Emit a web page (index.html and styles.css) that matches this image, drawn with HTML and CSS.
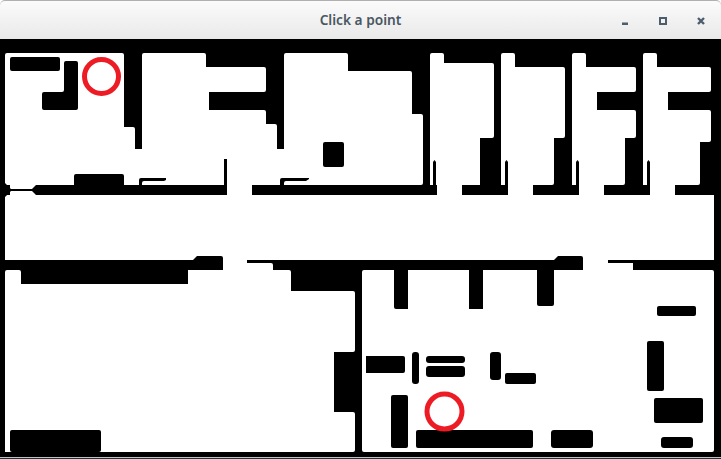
FILE: index.html
```html
<!DOCTYPE html>
<html lang="en">
<head>
<meta charset="utf-8">
<title>Click a point</title>
<link rel="stylesheet" href="styles.css">
</head>
<body>
<div class="window">
  <header class="titlebar">
    <span class="spacer"></span>
    <h1 class="title">Click a point</h1>
    <div class="controls">
      <svg class="ctl" width="8" height="8" viewBox="0 0 8 8"><rect class="ico" x="1" y="5.500" width="6" height="2.500"/></svg>
      <svg class="ctl" width="8" height="8" viewBox="0 0 8 8"><path class="ico" fill-rule="evenodd" d="M0 0H8V8H0ZM2 2V6H6V2Z"/></svg>
      <svg class="ctl" width="8" height="8" viewBox="0 0 8 8"><path class="ico-x" d="M1 1L7 7M7 1L1 7"/></svg>
    </div>
  </header>
  <svg class="map" viewBox="0 39 721 418" width="721" height="418">
    <rect class="wall" x="0" y="39" width="721" height="418"/>

    <!-- free space -->
    <path class="free" d="M5 55q0-2 2-2H122q2 0 2 2V127H133q2 0 2 2V149H142V55q0-2 2-2H204q2 0 2 2V67H264q2 0 2 2V90q0 2-2 2H209V110H264q2 0 2 2V124H275q2 0 2 2V149H284V55q0-2 2-2H346q2 0 2 2V71H410q2 0 2 2V114H421q2 0 2 2V183q0 2-2 2H5Z"/>
    <path class="free" d="M430 55q0-2 2-2H442q2 0 2 2V63H492q2 0 2 2V136q0 2-2 2H480V185H430Z"/>
    <path class="free" d="M501 55q0-2 2-2H513q2 0 2 2V67H563q2 0 2 2V136q0 2-2 2H554V183q0 2-2 2H501Z"/>
    <path class="free" d="M572 55q0-2 2-2H584q2 0 2 2V67H634q2 0 2 2V90q0 2-2 2H597V110H634q2 0 2 2V136q0 2-2 2H625V183q0 2-2 2H572Z"/>
    <path class="free" d="M643 55q0-2 2-2H655q2 0 2 2V67H709q2 0 2 2V90q0 2-2 2H668V110H709q2 0 2 2V140q0 2-2 2H700V183q0 2-2 2H643Z"/>
    <rect class="free" x="5" y="195" width="709" height="65"/>
    <rect class="free" x="10" y="185" width="26" height="10"/>
    <rect class="free" x="227" y="159" width="25" height="36"/>
    <rect class="free" x="437" y="185" width="25" height="10"/>
    <rect class="free" x="508" y="185" width="25" height="10"/>
    <rect class="free" x="579" y="185" width="25" height="10"/>
    <rect class="free" x="650" y="185" width="25" height="10"/>
    <path class="free" d="M5 272q0-2 2-2H19q2 0 2 2V284H188V270H223V260H247V263H271q2 0 2 2V270H289q2 0 2 2V291H353q2 0 2 2V350q0 2-2 2H334V412H353q2 0 2 2V450q0 2-2 2H5Z"/>
    <rect class="free" x="362" y="270" width="352" height="182" rx="2"/>
    <path class="free" d="M583 260H630L633 263V270H583Z"/>

    <!-- walls inside the free space -->
    <rect class="wall" x="224" y="159" width="3" height="26"/>
    <path class="wall" d="M5 183L11 189H32L36 185V195L32 191H11L5 197Z"/>
    <path class="wall" d="M74 185V176q0-2 2-2H122q2 0 2 2V185Z"/>
    <path class="wall" d="M139 185V180q0-2 2-2H166V180L164 181H144Q142 181 142 183V185Z"/>
    <path class="wall" d="M280 185V180q0-2 2-2H309V179L306 181H286Q284 181 284 183V185Z"/>
    <path class="wall" d="M433 185V162L434.500 160L436 162V195H433Z"/>
    <path class="wall" d="M505 185V162L506.500 160L508 162V195H505Z"/>
    <path class="wall" d="M576 185V162L577.500 160L579 162V195H576Z"/>
    <path class="wall" d="M647 185V162L648.500 160L650 162V195H647Z"/>
    <rect class="wall" x="10" y="57" width="50" height="14" rx="2"/>
    <path class="wall" d="M66 61H76q2 0 2 2V108q0 2-2 2H44q-2 0-2-2V94q0-2 2-2H62q2 0 2-2V63q0-2 2-2Z"/>
    <rect class="wall" x="323" y="142" width="21" height="25" rx="2"/>

    <path class="wall" d="M193 260L197 256H221q2 0 2 2V270H193Z"/>
    <path class="wall" d="M554 260L558 256H581q2 0 2 2V270H554Z"/>
    <rect class="wall" x="608" y="260" width="25" height="3"/>
    <rect class="wall" x="10" y="430" width="91" height="22" rx="2"/>
    <path class="wall" d="M394 270H408V309H396q-2 0-2-2Z"/>
    <rect class="wall" x="469" y="270" width="14" height="39"/>
    <path class="wall" d="M537 270H554V304q0 2-2 2H539q-2 0-2-2Z"/>
    <path class="wall" d="M366 356H403q2 0 2 2V371q0 2-2 2H366Z"/>
    <rect class="wall" x="412" y="352" width="7" height="32" rx="3"/>
    <rect class="wall" x="426" y="356" width="39" height="7" rx="3"/>
    <rect class="wall" x="426" y="366" width="39" height="11" rx="3"/>
    <rect class="wall" x="391" y="395" width="17" height="53" rx="2"/>
    <rect class="wall" x="416" y="430" width="117" height="18" rx="2"/>
    <rect class="wall" x="490" y="352" width="11" height="28" rx="3"/>
    <rect class="wall" x="505" y="373" width="31" height="11" rx="2"/>
    <rect class="wall" x="551" y="430" width="42" height="18" rx="3"/>
    <rect class="wall" x="657" y="306" width="39" height="10" rx="2"/>
    <rect class="wall" x="647" y="341" width="17" height="50" rx="2"/>
    <rect class="wall" x="654" y="398" width="49" height="25" rx="2"/>
    <rect class="wall" x="661" y="437" width="32" height="11" rx="3"/>

    <!-- picked points -->
    <circle class="pick" cx="101.500" cy="76.500" r="17"/>
    <circle class="pick" cx="444.500" cy="411.500" r="17.500"/>
  </svg>
  <div class="edge"></div>
</div>
</body>
</html>
```
FILE: styles.css
```css
html, body {
  margin: 0;
  padding: 0;
  background: #fff;
}
.window {
  width: 721px;
  height: 459px;
  display: flex;
  flex-direction: column;
  overflow: hidden;
}
.titlebar {
  box-sizing: border-box;
  height: 39px;
  display: grid;
  grid-template-columns: 1fr auto 1fr;
  align-items: center;
  border-top: 1px solid #b0b0b0;
  border-radius: 5px 5px 0 0;
  background: linear-gradient(#fbfbfb, #e9e9e9);
}
.title {
  margin: 0;
  font: 600 13.700px "Noto Sans", sans-serif;
  color: #4a5763;
  line-height: 38px;
}
.controls {
  display: flex;
  justify-content: flex-end;
  gap: 30px;
  padding: 0 16px 0 0;
  margin-top: 1px;
}
.ico { fill: #4c5d6b; }
.ico-x {
  fill: none;
  stroke: #4c5d6b;
  stroke-width: 2.400;
}
.map { display: block; flex: none; }
.wall { fill: #000; }
.free { fill: #fff; }
.pick {
  fill: none;
  stroke: #ed1c24;
  stroke-width: 5;
}
.edge {
  height: 2px;
  background: linear-gradient(#b4c6c6 50%, #1f2f33 50%);
}
```
